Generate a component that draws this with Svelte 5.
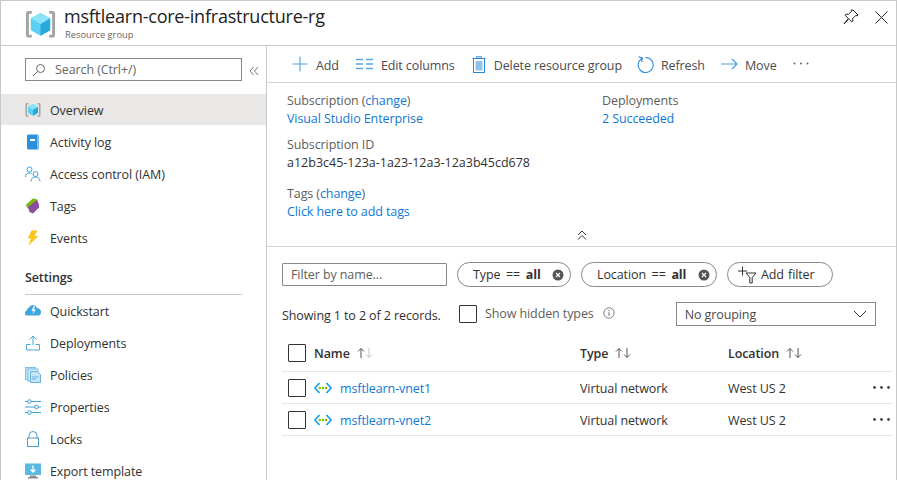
<script lang="ts">
    type NavItem = { label: string; icon: string };

    const topNav: NavItem[] = [
        { label: "Activity log", icon: "log" },
        { label: "Access control (IAM)", icon: "iam" },
        { label: "Tags", icon: "tags" },
        { label: "Events", icon: "events" },
    ];

    const settingsNav: NavItem[] = [
        { label: "Quickstart", icon: "quick" },
        { label: "Deployments", icon: "deploy" },
        { label: "Policies", icon: "policies" },
        { label: "Properties", icon: "props" },
        { label: "Locks", icon: "locks" },
        { label: "Export template", icon: "export" },
    ];

    const rows = ["msftlearn-vnet1", "msftlearn-vnet2"];
</script>

{#snippet cube(size: number)}
    <svg width={size} height={size} viewBox="0 0 32 32">
        <path d="M7 3.500H4Q2.500 3.500 2.500 5V26.500Q2.500 28 4 28H7M25 3.500h3Q29.500 3.500 29.500 5V26.500Q29.500 28 28 28H25" fill="none" stroke="#a3a3a3" stroke-width="3" />
        <path d="M16 4l10 5.500v12.500l-10 5.500-10-5.500V9.500z" fill="#5cd0f3" />
        <path d="M16 15.500l10-6v12.500l-10 5.500z" fill="#2aa8dc" />
        <path d="M16 4l10 5.500-10 6-10-6z" fill="#8be3fa" />
    </svg>
{/snippet}

{#snippet navIcon(name: string)}
    <svg width="16" height="16" viewBox="0 0 16 16">
        {#if name === "log"}
            <rect x="2" y="0.500" width="12" height="15" rx="1.500" fill="#2b8fdc" />
            <rect x="12" y="1" width="2" height="14" fill="#7cc0ee" />
            <rect x="5" y="5" width="5" height="2" fill="#fff" />
        {:else if name === "iam"}
            <g fill="none" stroke="#3f9fd6" stroke-width="1">
                <circle cx="4.500" cy="3.500" r="2.500" />
                <path d="M0.500 11c0-2.500 1.500-4 4-4 .8 0 1.500.2 2 .5" />
                <circle cx="10.500" cy="8" r="2.500" />
                <path d="M6 15.500c0-2.600 1.800-4.500 4.500-4.500s4.500 1.900 4.500 4.500" />
            </g>
        {:else if name === "tags"}
            <path d="M1 7L8 0.500l4 1-9 9z" fill="#59b4d9" />
            <path d="M1 7L8 0.500l5 1.500L3 11z" fill="#7fba00" />
            <path d="M3 9l9-7 2 4.500v3L8 15.500 4.500 14z" fill="#8a4f9e" />
        {:else if name === "events"}
            <path d="M6.500 0.500h6L9.500 6h4L3.500 15.500 6 8.500H2.800z" fill="#fcc419" />
        {:else if name === "quick"}
            <path d="M1 12.500Q0 12 0 10t2-3q0-2 2-2.500 1-2.500 4-2.500 3 0 4 3 4 .5 4 4 0 3.500-3 3.500z" fill="#3ea6dd" />
            <path d="M9 2.500L6.500 8h2L7.500 11.500 11 6.500H9L10 2.500z" fill="#fff" />
        {:else if name === "deploy"}
            <g fill="none" stroke="#4ea6d8" stroke-width="1">
                <path d="M8 10V1M4.500 4.500L8 1l3.500 3.500" />
                <path d="M5.500 9.500H1.500v5.500h13V9.500H10.500" />
            </g>
        {:else if name === "policies"}
            <rect x="0.500" y="0.500" width="10" height="12" fill="#bfe3f5" stroke="#7cc0e4" />
            <rect x="3" y="2" width="10" height="12" fill="#d4ecf8" stroke="#7cc0e4" />
            <path d="M5.500 4.500h7l3 3v8h-10z" fill="#c3e5f6" stroke="#66b3dc" />
            <path d="M7 10h6.500M7 12h4" stroke="#66b3dc" />
        {:else if name === "props"}
            <g fill="#fff" stroke="#3f9fd6" stroke-width="1">
                <path d="M0 2.500h16M0 8h16M0 13.500h16" fill="none" />
                <circle cx="4.500" cy="2.500" r="1.800" />
                <circle cx="11.500" cy="8" r="1.800" />
                <circle cx="4.500" cy="13.500" r="1.800" />
            </g>
        {:else if name === "locks"}
            <path d="M4 7V4.500a4 4 0 0 1 8 0V7" fill="none" stroke="#4f9cc9" stroke-width="1" />
            <rect x="2.500" y="7" width="11" height="8.500" fill="#fff" stroke="#4f9cc9" />
        {:else if name === "export"}
            <rect x="0" y="0.500" width="16" height="11.500" fill="#5bb8de" />
            <path d="M8 2.500v6M5.500 6.500L8 9l2.500-2.500" fill="none" stroke="#fff" stroke-width="1.300" />
            <path d="M5 12.500h6v1.500h2v1.500H3V14h2z" fill="#8a8a8a" />
        {/if}
    </svg>
{/snippet}

{#snippet vnet()}
    <svg width="18" height="12" viewBox="0 0 18 12">
        <path d="M5.500 1L1 6l4.500 5M12.500 1L17 6l-4.500 5" fill="none" stroke="#27a0e6" stroke-width="1.800" />
        <circle cx="5.800" cy="6" r="1.200" fill="#7fba00" />
        <circle cx="9" cy="6" r="1.200" fill="#7fba00" />
        <circle cx="12.200" cy="6" r="1.200" fill="#7fba00" />
    </svg>
{/snippet}

{#snippet sort(on: boolean)}
    <svg class="sort" width="18" height="12" viewBox="0 0 18 12">
        <path d="M5 11V1.500M2 4.500l3-3 3 3" fill="none" stroke="#555" stroke-width="1" />
        <path d="M13 1v9.500M10 7.500l3 3 3-3" fill="none" stroke={on ? "#555" : "#c4c4c4"} stroke-width="1" />
    </svg>
{/snippet}

{#snippet clear()}
    <svg width="12" height="12" viewBox="0 0 12 12">
        <circle cx="6" cy="6" r="5.500" fill="#555" />
        <path d="M4 4l4 4M8 4l-4 4" stroke="#fff" stroke-width="1.100" />
    </svg>
{/snippet}

<div class="blade">
    <header class="head">
        <div class="logo">{@render cube(31)}</div>
        <div class="title-block">
            <h1>msftlearn-core-infrastructure-rg</h1>
            <div class="sub">Resource group</div>
        </div>
        <div class="head-actions">
            <svg width="16" height="16" viewBox="0 0 16 16">
                <path d="M10 1l5 5-1 .8-1.300-.3-3 3 .1 2.500-1 1L5.500 9.700 1 15l4.300-5.500L2 6.200l1-1 2.500.1 3-3-.3-1.300z" fill="none" stroke="#222" stroke-width="1" />
            </svg>
            <svg width="13" height="13" viewBox="0 0 13 13">
                <path d="M0.500 0.500l12 12M12.500 0.500l-12 12" stroke="#222" stroke-width="1" />
            </svg>
        </div>
    </header>

    <div class="body">
        <aside class="side">
            <div class="search-row">
                <div class="search">
                    <svg width="14" height="14" viewBox="0 0 14 14">
                        <circle cx="8.500" cy="5.500" r="4" fill="none" stroke="#666" />
                        <path d="M5.500 8.500L1 13" stroke="#666" />
                    </svg>
                    <span>Search (Ctrl+/)</span>
                </div>
                <svg class="collapse" width="10" height="10" viewBox="0 0 10 10">
                    <path d="M4.500 1L1 5l3.500 4M9 1L5.500 5 9 9" fill="none" stroke="#777" />
                </svg>
            </div>

            <div class="nav-item active">
                <span class="nav-icon">{@render cube(16)}</span>
                Overview
            </div>
            {#each topNav as item}
                <div class="nav-item">
                    <span class="nav-icon">{@render navIcon(item.icon)}</span>
                    {item.label}
                </div>
            {/each}

            <div class="group">Settings</div>
            <div class="group-line"></div>
            {#each settingsNav as item}
                <div class="nav-item">
                    <span class="nav-icon">{@render navIcon(item.icon)}</span>
                    {item.label}
                </div>
            {/each}
        </aside>

        <main class="main">
            <div class="toolbar">
                <button class="cmd">
                    <svg width="16" height="16" viewBox="0 0 16 16"><path d="M8 0.500v15M0.500 8h15" stroke="#4a9fe0" stroke-width="1.100" /></svg>
                    <span>Add</span>
                </button>
                <button class="cmd">
                    <svg width="17" height="12" viewBox="0 0 17 12"><path d="M0 1.500h7M10 1.500h7M0 6h7M10 6h7M0 10.500h7M10 10.500h7" stroke="#5aa9e6" stroke-width="1.600" /></svg>
                    <span>Edit columns</span>
                </button>
                <button class="cmd">
                    <svg width="14" height="17" viewBox="0 0 14 17">
                        <path d="M0.500 2.500h13M4.500 2.500V0.800h5v1.700" fill="none" stroke="#2b88d8" />
                        <rect x="1.500" y="2.500" width="11" height="14" fill="none" stroke="#2b88d8" />
                        <rect x="3.500" y="5" width="7" height="9.500" fill="#8fc3ee" />
                    </svg>
                    <span>Delete resource group</span>
                </button>
                <button class="cmd refresh">
                    <svg width="17" height="17" viewBox="0 0 17 17">
                        <path d="M5.500 2.200a7.500 7.500 0 1 0 3-.7" fill="none" stroke="#2b88d8" stroke-width="1.100" />
                        <path d="M1.500 0.800l4 1.400-1 3.600" fill="none" stroke="#2b88d8" stroke-width="1.100" />
                    </svg>
                    <span>Refresh</span>
                </button>
                <button class="cmd move">
                    <svg width="17" height="12" viewBox="0 0 17 12"><path d="M0 6h16M11 1l5 5-5 5" fill="none" stroke="#4a9fe0" stroke-width="1.200" /></svg>
                    <span>Move</span>
                </button>
                <svg class="more" width="16" height="3" viewBox="0 0 16 3">
                    <circle cx="1.500" cy="1.500" r="1" fill="#666" />
                    <circle cx="8" cy="1.500" r="1" fill="#666" />
                    <circle cx="14.500" cy="1.500" r="1" fill="#666" />
                </svg>
            </div>

            <section class="essentials">
                <div class="ess-grid">
                    <div class="ess">
                        <div class="label">Subscription (<a href="#c">change</a>)</div>
                        <a href="#s">Visual Studio Enterprise</a>
                    </div>
                    <div class="ess">
                        <div class="label">Deployments</div>
                        <a href="#d">2 Succeeded</a>
                    </div>
                    <div class="ess wide">
                        <div class="label">Subscription ID</div>
                        <div class="value">a12b3c45-123a-1a23-12a3-12a3b45cd678</div>
                    </div>
                    <div class="ess wide">
                        <div class="label">Tags (<a href="#c">change</a>)</div>
                        <a href="#t">Click here to add tags</a>
                    </div>
                </div>
                <div class="fold">
                    <svg width="10" height="10" viewBox="0 0 10 10">
                        <path d="M1 5l4-4 4 4M1 9.500l4-4 4 4" fill="none" stroke="#333" />
                    </svg>
                </div>
            </section>

            <section class="content">
                <div class="filters">
                    <div class="filter-input">Filter by name...</div>
                    <div class="pill type">
                        <span>Type == <b>all</b></span>
                        {@render clear()}
                    </div>
                    <div class="pill location">
                        <span>Location == <b>all</b></span>
                        {@render clear()}
                    </div>
                    <div class="pill add">
                        <svg width="20" height="18" viewBox="0 0 20 18">
                            <path d="M5.500 0.500v9M1 5h9" stroke="#333" />
                            <path d="M9 7h10l-3.800 4.500V17h-2.400v-5.500z" fill="none" stroke="#333" />
                        </svg>
                        <span>Add filter</span>
                    </div>
                </div>

                <div class="records">
                    <span class="count">Showing 1 to 2 of 2 records.</span>
                    <span class="check"></span>
                    <span class="hidden-types">Show hidden types</span>
                    <svg class="info" width="12" height="12" viewBox="0 0 12 12">
                        <circle cx="6" cy="6" r="5.200" fill="none" stroke="#666" stroke-width="0.800" />
                        <path d="M6 5.200v3.600M6 3v1.200" stroke="#666" />
                    </svg>
                    <div class="select">
                        <span>No grouping</span>
                        <svg width="14" height="8" viewBox="0 0 14 8"><path d="M1 1l6 6 6-6" fill="none" stroke="#333" /></svg>
                    </div>
                </div>

                <div class="table">
                    <div class="row head-row">
                        <span class="check"></span>
                        <span class="col-name">Name {@render sort(false)}</span>
                        <span class="col-type">Type {@render sort(true)}</span>
                        <span class="col-loc">Location {@render sort(true)}</span>
                    </div>
                    {#each rows as name}
                        <div class="row">
                            <span class="check"></span>
                            <span class="col-name">
                                <span class="vnet">{@render vnet()}</span>
                                <a href="#n">{name}</a>
                            </span>
                            <span class="col-type">Virtual network</span>
                            <span class="col-loc">West US 2</span>
                            <svg class="row-more" width="17" height="3" viewBox="0 0 17 3">
                                <circle cx="1.500" cy="1.500" r="1.400" fill="#444" />
                                <circle cx="8.500" cy="1.500" r="1.400" fill="#444" />
                                <circle cx="15.500" cy="1.500" r="1.400" fill="#444" />
                            </svg>
                        </div>
                    {/each}
                </div>
            </section>
        </main>
    </div>
</div>

<style>
    :global(body) {
        margin: 0;
        background: #fff;
    }

    .blade {
        width: 897px;
        height: 480px;
        box-sizing: border-box;
        border: 1px solid #c8c8c8;
        border-bottom: 0;
        overflow: hidden;
        display: flex;
        flex-direction: column;
        font-family: "Open Sans", "Noto Sans", sans-serif;
        font-size: 12.500px;
        letter-spacing: -0.100px;
        color: #323130;
    }

    a {
        color: #0f78d4;
        text-decoration: none;
    }

    .head {
        height: 45px;
        flex: none;
        box-sizing: border-box;
        display: flex;
        align-items: flex-start;
        border-bottom: 1px solid #c8c8c8;
    }

    .logo {
        margin: 8px 0 0 24px;
        height: 31px;
    }

    .title-block {
        margin: 4px 0 0 8px;
    }

    h1 {
        margin: 0;
        font-size: 18px;
        font-weight: 400;
        line-height: 23px;
        letter-spacing: -0.230px;
        color: #222;
    }

    .sub {
        font-size: 9.300px;
        line-height: 12px;
        letter-spacing: 0;
        margin-top: 1px;
        margin-left: 1px;
        color: #666;
    }

    .head-actions {
        margin: 8px 8px 0 auto;
        display: flex;
        align-items: center;
        gap: 16px;
    }

    .body {
        flex: 1;
        display: flex;
        min-height: 0;
    }

    .side {
        width: 266px;
        box-sizing: border-box;
        flex: none;
        border-right: 1px solid #c8c8c8;
    }

    .search-row {
        height: 48px;
        box-sizing: border-box;
        padding: 12px 0 0 24px;
        display: flex;
        align-items: flex-start;
    }

    .search {
        width: 217px;
        height: 23px;
        box-sizing: border-box;
        border: 1px solid #8a8886;
        display: flex;
        align-items: center;
        gap: 9px;
        padding-left: 6px;
        color: #666;
    }

    .collapse {
        margin: 8px 0 0 7px;
    }

    .nav-item {
        height: 32px;
        display: flex;
        align-items: center;
        color: #323130;
        padding-left: 24px;
    }

    .nav-item.active {
        height: 30px;
        padding-top: 1px;
        margin-bottom: 1px;
        background: #e9e8e6;
    }

    .nav-icon {
        width: 25px;
        height: 16px;
        display: block;
        flex: none;
    }

    .group {
        margin: 13px 0 0 24px;
        height: 22px;
        line-height: 22px;
        font-weight: 600;
        color: #323130;
    }

    .group-line {
        margin: 5px 0 0 24px;
        width: 217px;
        border-top: 1px solid #c8c8c8;
    }

    .main {
        flex: 1;
        min-width: 0;
    }

    .toolbar {
        height: 37px;
        box-sizing: border-box;
        border-bottom: 1px solid #d6d6d6;
        display: flex;
        align-items: center;
        padding-left: 25px;
        gap: 17px;
    }

    .cmd {
        all: unset;
        display: flex;
        align-items: center;
        gap: 8px;
        color: #4b4b4b;
    }

    .cmd.refresh {
        margin-left: -2px;
        gap: 7px;
    }

    .cmd.move {
        margin-left: -1px;
        gap: 7px;
    }

    .cmd span {
        padding-top: 2px;
    }

    .more {
        margin: -2px 0 0 -1px;
    }

    .essentials {
        height: 164px;
        box-sizing: border-box;
        border-bottom: 1px solid #d6d6d6;
        padding: 9px 0 0 20px;
    }

    .ess-grid {
        display: grid;
        grid-template-columns: 315px 1fr;
        line-height: 18px;
    }

    .ess {
        height: 44px;
    }

    .ess.wide {
        grid-column: 1 / -1;
    }

    .ess.wide:last-child {
        margin-top: 5px;
    }

    .label {
        color: #605e5c;
    }

    .label a {
        color: #0f78d4;
    }

    .value {
        color: #323130;
        letter-spacing: 0;
    }

    .fold {
        display: flex;
        justify-content: center;
        margin: 1px 0 0 -20px;
    }

    .content {
        padding: 15px 0 0 15px;
    }

    .filters {
        display: flex;
        align-items: center;
        gap: 10px;
        height: 25px;
    }

    .filter-input {
        width: 165px;
        height: 23px;
        box-sizing: border-box;
        border: 1px solid #8a8886;
        border-radius: 1px;
        padding-left: 8px;
        line-height: 21px;
        color: #605e5c;
    }

    .pill {
        height: 25px;
        box-sizing: border-box;
        border: 1px solid #8a8886;
        border-radius: 13px;
        display: flex;
        align-items: center;
        justify-content: space-between;
        padding: 0 6px 0 15px;
        color: #323130;
        word-spacing: 2.500px;
    }

    .pill.type {
        width: 114px;
    }

    .pill.location {
        width: 136px;
    }

    .pill.add {
        width: 106px;
        padding: 0 0 0 9px;
        justify-content: flex-start;
        gap: 4px;
        word-spacing: 1px;
    }

    .records {
        display: flex;
        align-items: center;
        height: 24px;
        margin-top: 15px;
    }

    .count {
        width: 177px;
        flex: none;
        padding-top: 2px;
    }

    .check {
        width: 16px;
        height: 16px;
        flex: none;
        border: 1px solid #333;
        border-radius: 1px;
        display: block;
    }

    .hidden-types {
        margin-left: 8px;
        color: #605e5c;
        margin-top: -2px;
    }

    .info {
        margin: -2px 0 0 9px;
    }

    .select {
        margin-left: 61px;
        width: 200px;
        height: 24px;
        box-sizing: border-box;
        border: 1px solid #8a8886;
        display: flex;
        align-items: center;
        justify-content: space-between;
        padding: 0 8px;
        color: #4b4b4b;
    }

    .table {
        margin-top: 10px;
        margin-right: 3px;
    }

    .row {
        display: grid;
        grid-template-columns: 26px 266px 148px 1fr 17px;
        align-items: center;
        box-sizing: border-box;
        height: 32px;
        padding: 1px 3px 0 6px;
        border-bottom: 1px solid #e8e8e8;
    }

    .row.head-row {
        height: 36px;
        padding: 0 3px 1px 6px;
        font-weight: 600;
    }

    .col-name {
        display: flex;
        align-items: center;
    }

    .col-type,
    .col-loc {
        display: flex;
        align-items: center;
    }

    .head-row .col-name,
    .head-row .col-type,
    .head-row .col-loc {
        gap: 6px;
    }

    .sort {
        display: block;
    }

    .vnet {
        width: 26px;
        height: 12px;
        display: block;
        margin-top: -2px;
    }

    .row-more {
        display: block;
        margin-top: -1px;
    }
</style>
